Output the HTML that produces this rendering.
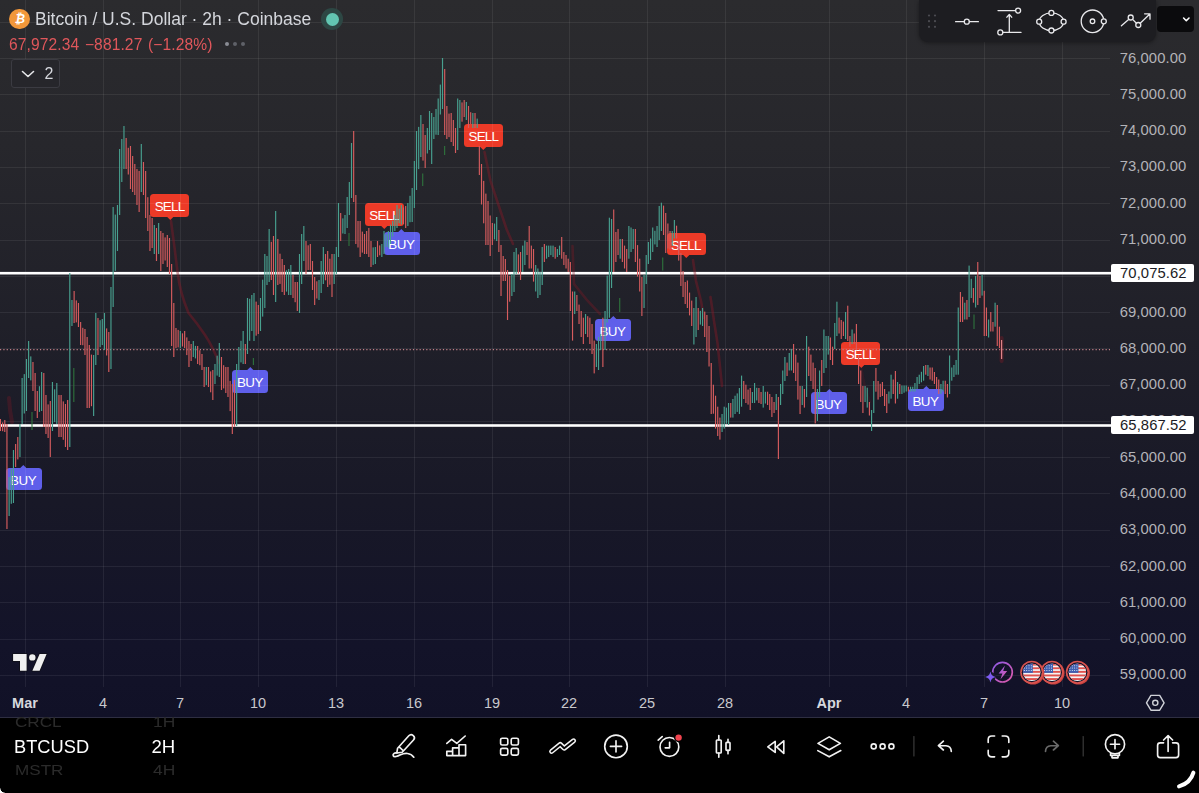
<!DOCTYPE html>
<html><head><meta charset="utf-8"><title>Bitcoin / U.S. Dollar</title>
<style>
*{box-sizing:border-box;margin:0;padding:0}
html,body{width:1199px;height:793px;overflow:hidden;background:#000}
body{font-family:"Liberation Sans",sans-serif;position:relative;color:#d1d4dc}
#chart{position:absolute;left:0;top:0;width:1199px;height:717px;background:linear-gradient(180deg,#2b2b2e 0%,#27272c 20%,#202029 45%,#181827 70%,#131329 90%,#111127 100%)}
#chart svg.main{position:absolute;left:0;top:0}
.pl{position:absolute;right:12.6px;width:90px;text-align:right;font-size:14.8px;line-height:18px;color:#b3b3b8;letter-spacing:.1px}
.tl{position:absolute;top:694px;width:60px;text-align:center;font-size:14.5px;line-height:18px;color:#c8c8cd}
.tl.b{font-weight:bold;color:#d6d8de}
.hl{position:absolute;left:0;width:1111px;height:3px;background:#fff}
.pb{position:absolute;left:1111px;width:82.5px;height:18.2px;background:#fff;color:#1b1b24;font-size:14.8px;line-height:18.2px;text-align:right;padding-right:6.8px;border-radius:2px;letter-spacing:.1px}
.sg{position:absolute;height:22.6px;border-radius:3.5px;color:#fff;font-size:13.4px;line-height:18.6px;padding-top:4px;text-align:left;white-space:nowrap}
.sg.sell{background:#ec3a27;padding-left:4.3px;letter-spacing:-.75px}
.sg.buy{background:#5f5fea;padding-left:4.6px;letter-spacing:-.5px}
.sg i{position:absolute;left:50%;margin-left:-2.3px;width:4.6px;height:4.6px;transform:rotate(45deg)}
.sg.sell i{bottom:-1.6px;background:#ec3a27}
.sg.buy i{top:-1.6px;background:#5f5fea}
#title{position:absolute;left:35px;top:7.8px;font-size:17.5px;line-height:22px;color:#d4d6dc;white-space:nowrap}
#vals{position:absolute;left:9px;top:36px;font-size:15.6px;line-height:18px;color:#e0575b;white-space:nowrap;letter-spacing:.1px;word-spacing:1.2px}
#btc{position:absolute;left:9.4px;top:8.9px;width:20.6px;height:20.6px;border-radius:50%;background:#f2973a;color:#fff;font-size:12px;font-style:italic;line-height:20.6px;text-align:center;font-weight:bold}
#dot{position:absolute;left:321px;top:8px;width:22px;height:22px;border-radius:50%;background:#2d4744}
#dot:after{content:"";position:absolute;left:4.5px;top:4.5px;width:13px;height:13px;border-radius:50%;background:#62c6b2}
#more{position:absolute;left:225px;top:42px}
#more b{display:inline-block;width:4px;height:4px;border-radius:50%;background:#8a8c94;margin-right:4px;vertical-align:top}
#more b+b{background:#5f6168}
#collapse{position:absolute;left:10.5px;top:59px;width:49px;height:29px;border:1px solid #3b3b42;border-radius:3px;background:#26262b}
#collapse span{position:absolute;left:33px;top:4px;font-size:16px;line-height:20px;color:#d4d6dc}
#tools{position:absolute;left:919px;top:0;width:237px;height:42px;background:#1d1d21;border-radius:0 0 9px 9px;box-shadow:0 1px 4px rgba(0,0,0,.4)}
#ccy{position:absolute;left:1157px;top:6px;width:36.5px;height:26px;background:#0b0b0d;border-radius:4px}
#bar{position:absolute;left:0;top:717px;width:1199px;height:76px;background:#000;box-shadow:inset 0 1px 0 #2e2e42}
.sym{position:absolute;left:14px;font-size:18.3px;line-height:24px;color:#fff;white-space:nowrap}
.sym.f{color:#2b2b2b;left:15.3px;font-size:14.5px;transform:scaleX(1.18);transform-origin:0 50%}
.tf{position:absolute;left:151.5px;font-size:18.6px;line-height:24px;color:#fff}
.tf.f{color:#2b2b2b;left:152.6px;font-size:14.5px;transform:scaleX(1.2);transform-origin:0 50%}
</style></head><body>
<div id="chart">
<div class="sg buy" style="left:5.5px;top:467.8px;width:36px">BUY<i></i></div>
<div class="sg sell" style="left:150.4px;top:194.2px;width:39px">SELL<i></i></div>
<div class="sg buy" style="left:232.3px;top:370px;width:36px">BUY<i></i></div>
<div class="sg sell" style="left:365.0px;top:203.4px;width:39px">SELL<i></i></div>
<div class="sg buy" style="left:383.7px;top:232px;width:36px">BUY<i></i></div>
<div class="sg sell" style="left:464.2px;top:124px;width:39px">SELL<i></i></div>
<div class="sg buy" style="left:594.8px;top:318.5px;width:36px">BUY<i></i></div>
<div class="sg sell" style="left:666.6px;top:232.8px;width:39px">SELL<i></i></div>
<div class="sg buy" style="left:810.9px;top:391.6px;width:36px">BUY<i></i></div>
<div class="sg sell" style="left:841.4px;top:342px;width:39px">SELL<i></i></div>
<div class="sg buy" style="left:907.8px;top:388.7px;width:36px">BUY<i></i></div>
<svg class="main" width="1199" height="717" viewBox="0 0 1199 717">
<g stroke="#ffffff" stroke-opacity="0.072" stroke-width="1" fill="none">
<path d="M25.5 0V687"/>
<path d="M103.5 0V687"/>
<path d="M180.5 0V687"/>
<path d="M258.5 0V687"/>
<path d="M336.5 0V687"/>
<path d="M414.5 0V687"/>
<path d="M492.5 0V687"/>
<path d="M569.5 0V687"/>
<path d="M647.5 0V687"/>
<path d="M725.5 0V687"/>
<path d="M829.5 0V687"/>
<path d="M906.5 0V687"/>
<path d="M984.5 0V687"/>
<path d="M1062.5 0V687"/>
<path d="M0 675.5H1110"/>
<path d="M0 639.5H1110"/>
<path d="M0 602.5H1110"/>
<path d="M0 566.5H1110"/>
<path d="M0 530.5H1110"/>
<path d="M0 493.5H1110"/>
<path d="M0 457.5H1110"/>
<path d="M0 421.5H1110"/>
<path d="M0 385.5H1110"/>
<path d="M0 348.5H1110"/>
<path d="M0 312.5H1110"/>
<path d="M0 276.5H1110"/>
<path d="M0 240.5H1110"/>
<path d="M0 203.5H1110"/>
<path d="M0 167.5H1110"/>
<path d="M0 131.5H1110"/>
<path d="M0 94.5H1110"/>
<path d="M0 58.5H1110"/>
<path d="M0 22.5H1110"/>
</g>
<path d="M0 349.7H1110" stroke="#c08088" stroke-width="1.2" stroke-dasharray="1.2 2.13"/>
<rect x="0" y="271.9" width="1111" height="2.6" fill="#fff"/><rect x="0" y="424.2" width="1111" height="2.6" fill="#fff"/>

<g fill="none" stroke="#8a1a26" stroke-width="2.6" stroke-linecap="round" stroke-linejoin="round" opacity="0.42">
<path d="M171 221 L174.7 249 L177.5 272 Q180 293 188.5 313 Q197 323 205 335 T219 363"/>
<path d="M484.5 152 L490.4 180.6 L498.5 205 L506.5 229 L513 244"/>
<path d="M572.5 246 L574 284 Q586 300 600 314" opacity=".8"/>
<path d="M693 260 L696 281 L701 301 L704 318"/>
<path d="M710.5 297 L714 321 L717.5 343 L722 386"/>
<path d="M9 398 C9.5 408 10.5 415 12 422" stroke-width="4" opacity=".7"/>
<path d="M861.5 369 C863 380 866 392 870 402" opacity=".4"/>
</g>
<path d="M1001.6 338V361" stroke="#8a1a26" stroke-width="4" opacity=".35" stroke-linecap="round"/>
<g fill="none" stroke="#2f7a3e" stroke-width="1.2" opacity=".85">
<path d="M32 412V430M73.8 368V402M619.7 298V312M662.7 257.5V270.5M444.6 146V155M422.7 173.5V186M974 314.5V329M253.4 358V365M349 233V246"/>
</g>

<g shape-rendering="auto">
<rect x="1001.02" y="340.0" width="1.15" height="19.0" fill="#e3878b"/>
<rect x="998.86" y="326.7" width="1.15" height="21.3" fill="#d65c5e"/>
<rect x="996.69" y="305.0" width="1.15" height="41.0" fill="#d65c5e"/>
<rect x="994.52" y="302.7" width="1.15" height="24.0" fill="#48a08f"/>
<rect x="992.36" y="322.0" width="1.15" height="9.5" fill="#d65c5e"/>
<rect x="990.19" y="312.0" width="1.15" height="19.5" fill="#d65c5e"/>
<rect x="988.02" y="319.5" width="1.15" height="18.0" fill="#48a08f"/>
<rect x="985.86" y="307.5" width="1.15" height="28.5" fill="#d65c5e"/>
<rect x="983.69" y="290.8" width="1.15" height="45.2" fill="#d65c5e"/>
<rect x="981.52" y="275.0" width="1.15" height="20.6" fill="#48a08f"/>
<rect x="979.36" y="276.0" width="1.15" height="22.0" fill="#d65c5e"/>
<rect x="977.19" y="262.0" width="1.15" height="43.0" fill="#d65c5e"/>
<rect x="975.02" y="276.0" width="1.15" height="31.5" fill="#48a08f"/>
<rect x="972.85" y="288.0" width="1.15" height="14.7" fill="#d65c5e"/>
<rect x="970.69" y="278.8" width="1.15" height="19.2" fill="#48a08f"/>
<rect x="968.52" y="265.6" width="1.15" height="51.4" fill="#48a08f"/>
<rect x="966.35" y="300.0" width="1.15" height="19.5" fill="#d65c5e"/>
<rect x="964.19" y="302.7" width="1.15" height="16.8" fill="#48a08f"/>
<rect x="962.02" y="296.8" width="1.15" height="25.2" fill="#d65c5e"/>
<rect x="959.85" y="292.0" width="1.15" height="30.0" fill="#d65c5e"/>
<rect x="957.68" y="307.5" width="1.15" height="67.2" fill="#48a08f"/>
<rect x="955.52" y="360.0" width="1.15" height="14.7" fill="#48a08f"/>
<rect x="953.35" y="365.0" width="1.15" height="12.0" fill="#48a08f"/>
<rect x="951.18" y="367.5" width="1.15" height="13.2" fill="#48a08f"/>
<rect x="949.02" y="355.5" width="1.15" height="38.5" fill="#48a08f"/>
<rect x="946.85" y="384.0" width="1.15" height="13.5" fill="#d65c5e"/>
<rect x="944.68" y="380.7" width="1.15" height="13.3" fill="#d65c5e"/>
<rect x="942.52" y="380.7" width="1.15" height="10.8" fill="#48a08f"/>
<rect x="940.35" y="384.0" width="1.15" height="10.0" fill="#48a08f"/>
<rect x="938.18" y="379.5" width="1.15" height="14.5" fill="#d65c5e"/>
<rect x="936.01" y="377.0" width="1.15" height="12.0" fill="#d65c5e"/>
<rect x="933.85" y="372.0" width="1.15" height="12.0" fill="#d65c5e"/>
<rect x="931.68" y="367.5" width="1.15" height="13.2" fill="#d65c5e"/>
<rect x="929.51" y="367.5" width="1.15" height="12.0" fill="#d65c5e"/>
<rect x="927.35" y="365.0" width="1.15" height="11.0" fill="#48a08f"/>
<rect x="925.18" y="365.0" width="1.15" height="9.7" fill="#d65c5e"/>
<rect x="923.01" y="366.0" width="1.15" height="14.7" fill="#48a08f"/>
<rect x="920.85" y="371.8" width="1.15" height="10.5" fill="#48a08f"/>
<rect x="918.68" y="374.7" width="1.15" height="9.3" fill="#48a08f"/>
<rect x="916.51" y="377.0" width="1.15" height="12.0" fill="#48a08f"/>
<rect x="914.35" y="383.0" width="1.15" height="8.5" fill="#48a08f"/>
<rect x="912.18" y="386.7" width="1.15" height="4.8" fill="#48a08f"/>
<rect x="910.01" y="386.7" width="1.15" height="4.8" fill="#48a08f"/>
<rect x="907.84" y="386.7" width="1.15" height="4.8" fill="#d65c5e"/>
<rect x="905.68" y="385.5" width="1.15" height="6.0" fill="#48a08f"/>
<rect x="903.51" y="385.5" width="1.15" height="7.2" fill="#48a08f"/>
<rect x="901.34" y="385.5" width="1.15" height="8.5" fill="#48a08f"/>
<rect x="899.18" y="384.0" width="1.15" height="10.0" fill="#d65c5e"/>
<rect x="897.01" y="382.0" width="1.15" height="16.7" fill="#48a08f"/>
<rect x="894.84" y="371.0" width="1.15" height="32.5" fill="#d65c5e"/>
<rect x="892.67" y="379.5" width="1.15" height="14.5" fill="#d65c5e"/>
<rect x="890.51" y="374.7" width="1.15" height="24.0" fill="#48a08f"/>
<rect x="888.34" y="391.5" width="1.15" height="12.0" fill="#48a08f"/>
<rect x="886.17" y="394.0" width="1.15" height="19.0" fill="#d65c5e"/>
<rect x="884.01" y="389.0" width="1.15" height="17.0" fill="#d65c5e"/>
<rect x="881.84" y="382.0" width="1.15" height="14.0" fill="#d65c5e"/>
<rect x="879.67" y="383.8" width="1.15" height="13.2" fill="#d65c5e"/>
<rect x="877.51" y="381.0" width="1.15" height="18.6" fill="#d65c5e"/>
<rect x="875.34" y="368.0" width="1.15" height="23.7" fill="#d65c5e"/>
<rect x="873.17" y="381.0" width="1.15" height="32.0" fill="#48a08f"/>
<rect x="871.00" y="410.0" width="1.15" height="21.0" fill="#48a08f"/>
<rect x="868.84" y="402.0" width="1.15" height="13.5" fill="#d65c5e"/>
<rect x="866.67" y="387.7" width="1.15" height="19.9" fill="#48a08f"/>
<rect x="864.50" y="386.0" width="1.15" height="16.0" fill="#48a08f"/>
<rect x="862.34" y="386.0" width="1.15" height="27.0" fill="#d65c5e"/>
<rect x="860.17" y="370.5" width="1.15" height="31.5" fill="#d65c5e"/>
<rect x="858.00" y="355.0" width="1.15" height="29.0" fill="#d65c5e"/>
<rect x="855.84" y="324.0" width="1.15" height="26.0" fill="#d65c5e"/>
<rect x="853.67" y="333.5" width="1.15" height="10.5" fill="#d65c5e"/>
<rect x="851.50" y="329.5" width="1.15" height="14.5" fill="#48a08f"/>
<rect x="849.34" y="336.0" width="1.15" height="10.7" fill="#d65c5e"/>
<rect x="847.17" y="305.7" width="1.15" height="35.3" fill="#d65c5e"/>
<rect x="845.00" y="312.0" width="1.15" height="27.0" fill="#48a08f"/>
<rect x="842.83" y="321.6" width="1.15" height="14.4" fill="#d65c5e"/>
<rect x="840.67" y="320.0" width="1.15" height="19.0" fill="#d65c5e"/>
<rect x="838.50" y="317.6" width="1.15" height="15.9" fill="#d65c5e"/>
<rect x="836.33" y="301.7" width="1.15" height="34.3" fill="#48a08f"/>
<rect x="834.17" y="323.0" width="1.15" height="26.0" fill="#48a08f"/>
<rect x="832.00" y="346.7" width="1.15" height="18.3" fill="#d65c5e"/>
<rect x="829.83" y="337.5" width="1.15" height="22.5" fill="#d65c5e"/>
<rect x="827.66" y="336.0" width="1.15" height="18.6" fill="#48a08f"/>
<rect x="825.50" y="336.0" width="1.15" height="32.0" fill="#48a08f"/>
<rect x="823.33" y="329.5" width="1.15" height="43.5" fill="#48a08f"/>
<rect x="821.16" y="360.0" width="1.15" height="26.0" fill="#d65c5e"/>
<rect x="819.00" y="370.5" width="1.15" height="26.5" fill="#48a08f"/>
<rect x="816.83" y="389.0" width="1.15" height="32.0" fill="#48a08f"/>
<rect x="814.66" y="368.0" width="1.15" height="55.4" fill="#d65c5e"/>
<rect x="812.50" y="362.6" width="1.15" height="26.4" fill="#d65c5e"/>
<rect x="810.33" y="354.6" width="1.15" height="26.4" fill="#d65c5e"/>
<rect x="808.16" y="346.7" width="1.15" height="29.3" fill="#d65c5e"/>
<rect x="806.00" y="336.0" width="1.15" height="61.0" fill="#48a08f"/>
<rect x="803.83" y="389.0" width="1.15" height="18.6" fill="#d65c5e"/>
<rect x="801.66" y="386.0" width="1.15" height="19.0" fill="#48a08f"/>
<rect x="799.49" y="386.0" width="1.15" height="28.0" fill="#d65c5e"/>
<rect x="797.33" y="362.6" width="1.15" height="37.0" fill="#d65c5e"/>
<rect x="795.16" y="354.6" width="1.15" height="26.4" fill="#d65c5e"/>
<rect x="792.99" y="344.0" width="1.15" height="29.0" fill="#d65c5e"/>
<rect x="790.83" y="349.0" width="1.15" height="21.5" fill="#48a08f"/>
<rect x="788.66" y="353.0" width="1.15" height="17.5" fill="#48a08f"/>
<rect x="786.49" y="362.6" width="1.15" height="13.4" fill="#d65c5e"/>
<rect x="784.33" y="357.0" width="1.15" height="24.0" fill="#48a08f"/>
<rect x="782.16" y="370.5" width="1.15" height="23.5" fill="#48a08f"/>
<rect x="779.99" y="384.0" width="1.15" height="21.0" fill="#48a08f"/>
<rect x="777.82" y="397.0" width="1.15" height="62.0" fill="#d65c5e"/>
<rect x="775.66" y="394.0" width="1.15" height="16.0" fill="#48a08f"/>
<rect x="773.49" y="402.0" width="1.15" height="11.0" fill="#d65c5e"/>
<rect x="771.32" y="397.0" width="1.15" height="20.0" fill="#d65c5e"/>
<rect x="769.16" y="394.0" width="1.15" height="16.0" fill="#d65c5e"/>
<rect x="766.99" y="391.7" width="1.15" height="13.3" fill="#d65c5e"/>
<rect x="764.82" y="391.8" width="1.15" height="11.7" fill="#48a08f"/>
<rect x="762.65" y="386.0" width="1.15" height="21.6" fill="#48a08f"/>
<rect x="760.49" y="392.0" width="1.15" height="12.0" fill="#d65c5e"/>
<rect x="758.32" y="388.0" width="1.15" height="15.0" fill="#d65c5e"/>
<rect x="756.15" y="387.8" width="1.15" height="12.6" fill="#48a08f"/>
<rect x="753.99" y="383.0" width="1.15" height="20.0" fill="#48a08f"/>
<rect x="751.82" y="392.0" width="1.15" height="11.0" fill="#48a08f"/>
<rect x="749.65" y="388.0" width="1.15" height="22.0" fill="#d65c5e"/>
<rect x="747.49" y="389.6" width="1.15" height="15.0" fill="#d65c5e"/>
<rect x="745.32" y="384.7" width="1.15" height="18.3" fill="#d65c5e"/>
<rect x="743.15" y="381.0" width="1.15" height="18.0" fill="#d65c5e"/>
<rect x="740.99" y="375.6" width="1.15" height="31.1" fill="#48a08f"/>
<rect x="738.82" y="388.0" width="1.15" height="26.0" fill="#48a08f"/>
<rect x="736.65" y="393.4" width="1.15" height="18.5" fill="#48a08f"/>
<rect x="734.48" y="395.7" width="1.15" height="18.3" fill="#48a08f"/>
<rect x="732.32" y="399.0" width="1.15" height="18.6" fill="#48a08f"/>
<rect x="730.15" y="403.0" width="1.15" height="14.6" fill="#d65c5e"/>
<rect x="727.98" y="403.0" width="1.15" height="22.0" fill="#48a08f"/>
<rect x="725.82" y="407.6" width="1.15" height="16.1" fill="#48a08f"/>
<rect x="723.65" y="406.7" width="1.15" height="21.9" fill="#48a08f"/>
<rect x="721.48" y="414.0" width="1.15" height="18.0" fill="#48a08f"/>
<rect x="719.32" y="417.6" width="1.15" height="22.0" fill="#d65c5e"/>
<rect x="717.15" y="406.7" width="1.15" height="29.3" fill="#d65c5e"/>
<rect x="714.98" y="395.7" width="1.15" height="32.9" fill="#d65c5e"/>
<rect x="712.81" y="384.7" width="1.15" height="29.0" fill="#d65c5e"/>
<rect x="710.65" y="363.0" width="1.15" height="51.0" fill="#d65c5e"/>
<rect x="708.48" y="326.0" width="1.15" height="40.5" fill="#d65c5e"/>
<rect x="706.31" y="315.0" width="1.15" height="37.0" fill="#d65c5e"/>
<rect x="704.15" y="311.6" width="1.15" height="25.4" fill="#d65c5e"/>
<rect x="701.98" y="308.0" width="1.15" height="18.0" fill="#48a08f"/>
<rect x="699.81" y="310.8" width="1.15" height="13.8" fill="#48a08f"/>
<rect x="697.64" y="308.0" width="1.15" height="22.0" fill="#d65c5e"/>
<rect x="695.48" y="297.0" width="1.15" height="40.0" fill="#48a08f"/>
<rect x="693.31" y="308.0" width="1.15" height="36.5" fill="#48a08f"/>
<rect x="691.14" y="300.6" width="1.15" height="25.4" fill="#d65c5e"/>
<rect x="688.98" y="292.6" width="1.15" height="22.8" fill="#d65c5e"/>
<rect x="686.81" y="280.5" width="1.15" height="27.5" fill="#d65c5e"/>
<rect x="684.64" y="282.0" width="1.15" height="22.0" fill="#d65c5e"/>
<rect x="682.48" y="271.0" width="1.15" height="26.0" fill="#d65c5e"/>
<rect x="680.31" y="253.0" width="1.15" height="33.0" fill="#d65c5e"/>
<rect x="678.14" y="240.8" width="1.15" height="19.8" fill="#d65c5e"/>
<rect x="675.98" y="225.7" width="1.15" height="12.8" fill="#d65c5e"/>
<rect x="673.81" y="220.0" width="1.15" height="18.5" fill="#48a08f"/>
<rect x="671.64" y="231.0" width="1.15" height="15.0" fill="#48a08f"/>
<rect x="669.47" y="231.0" width="1.15" height="18.5" fill="#d65c5e"/>
<rect x="667.31" y="223.5" width="1.15" height="25.0" fill="#d65c5e"/>
<rect x="665.14" y="213.0" width="1.15" height="40.0" fill="#d65c5e"/>
<rect x="662.97" y="205.6" width="1.15" height="29.4" fill="#d65c5e"/>
<rect x="660.81" y="202.7" width="1.15" height="28.3" fill="#48a08f"/>
<rect x="658.64" y="206.0" width="1.15" height="34.0" fill="#48a08f"/>
<rect x="656.47" y="226.0" width="1.15" height="21.0" fill="#48a08f"/>
<rect x="654.31" y="230.8" width="1.15" height="13.6" fill="#48a08f"/>
<rect x="652.14" y="227.5" width="1.15" height="24.5" fill="#48a08f"/>
<rect x="649.97" y="238.5" width="1.15" height="21.5" fill="#48a08f"/>
<rect x="647.80" y="242.0" width="1.15" height="22.0" fill="#48a08f"/>
<rect x="645.64" y="255.0" width="1.15" height="29.0" fill="#48a08f"/>
<rect x="643.47" y="275.0" width="1.15" height="33.0" fill="#48a08f"/>
<rect x="641.30" y="277.0" width="1.15" height="39.0" fill="#d65c5e"/>
<rect x="639.14" y="258.7" width="1.15" height="32.8" fill="#d65c5e"/>
<rect x="636.97" y="245.1" width="1.15" height="31.5" fill="#d65c5e"/>
<rect x="634.80" y="229.0" width="1.15" height="33.0" fill="#d65c5e"/>
<rect x="632.63" y="229.0" width="1.15" height="20.0" fill="#48a08f"/>
<rect x="630.47" y="227.5" width="1.15" height="24.5" fill="#48a08f"/>
<rect x="628.30" y="226.0" width="1.15" height="32.7" fill="#48a08f"/>
<rect x="626.13" y="249.0" width="1.15" height="23.0" fill="#d65c5e"/>
<rect x="623.97" y="245.6" width="1.15" height="22.9" fill="#d65c5e"/>
<rect x="621.80" y="239.0" width="1.15" height="23.0" fill="#d65c5e"/>
<rect x="619.63" y="239.0" width="1.15" height="19.7" fill="#48a08f"/>
<rect x="617.47" y="229.0" width="1.15" height="26.0" fill="#d65c5e"/>
<rect x="615.30" y="232.0" width="1.15" height="30.0" fill="#d65c5e"/>
<rect x="613.13" y="209.5" width="1.15" height="62.5" fill="#d65c5e"/>
<rect x="610.97" y="219.0" width="1.15" height="69.0" fill="#48a08f"/>
<rect x="608.80" y="217.7" width="1.15" height="100.0" fill="#48a08f"/>
<rect x="606.63" y="275.6" width="1.15" height="47.0" fill="#48a08f"/>
<rect x="604.46" y="311.0" width="1.15" height="39.0" fill="#48a08f"/>
<rect x="602.30" y="317.7" width="1.15" height="49.3" fill="#d65c5e"/>
<rect x="600.13" y="334.0" width="1.15" height="16.0" fill="#48a08f"/>
<rect x="597.96" y="337.0" width="1.15" height="33.0" fill="#48a08f"/>
<rect x="595.80" y="344.0" width="1.15" height="23.0" fill="#48a08f"/>
<rect x="593.63" y="340.6" width="1.15" height="32.8" fill="#d65c5e"/>
<rect x="591.46" y="324.0" width="1.15" height="30.0" fill="#d65c5e"/>
<rect x="589.30" y="317.7" width="1.15" height="26.3" fill="#d65c5e"/>
<rect x="587.13" y="316.2" width="1.15" height="20.9" fill="#d65c5e"/>
<rect x="584.96" y="314.0" width="1.15" height="20.0" fill="#48a08f"/>
<rect x="582.79" y="317.7" width="1.15" height="26.3" fill="#d65c5e"/>
<rect x="580.63" y="311.0" width="1.15" height="26.0" fill="#d65c5e"/>
<rect x="578.46" y="304.6" width="1.15" height="19.4" fill="#d65c5e"/>
<rect x="576.29" y="295.0" width="1.15" height="16.0" fill="#d65c5e"/>
<rect x="574.13" y="291.5" width="1.15" height="22.5" fill="#48a08f"/>
<rect x="571.96" y="291.5" width="1.15" height="49.1" fill="#d65c5e"/>
<rect x="569.79" y="262.0" width="1.15" height="49.0" fill="#d65c5e"/>
<rect x="567.62" y="258.7" width="1.15" height="13.3" fill="#d65c5e"/>
<rect x="565.46" y="255.0" width="1.15" height="13.5" fill="#d65c5e"/>
<rect x="563.29" y="252.0" width="1.15" height="13.0" fill="#d65c5e"/>
<rect x="561.12" y="237.0" width="1.15" height="21.7" fill="#d65c5e"/>
<rect x="558.96" y="245.6" width="1.15" height="9.4" fill="#48a08f"/>
<rect x="556.79" y="249.0" width="1.15" height="8.0" fill="#48a08f"/>
<rect x="554.62" y="247.0" width="1.15" height="11.7" fill="#d65c5e"/>
<rect x="552.46" y="245.6" width="1.15" height="11.4" fill="#48a08f"/>
<rect x="550.29" y="245.6" width="1.15" height="9.5" fill="#48a08f"/>
<rect x="548.12" y="245.6" width="1.15" height="11.4" fill="#48a08f"/>
<rect x="545.96" y="245.6" width="1.15" height="13.1" fill="#48a08f"/>
<rect x="543.79" y="244.0" width="1.15" height="18.0" fill="#d65c5e"/>
<rect x="541.62" y="247.0" width="1.15" height="38.0" fill="#48a08f"/>
<rect x="539.45" y="272.0" width="1.15" height="23.0" fill="#48a08f"/>
<rect x="537.29" y="268.5" width="1.15" height="29.5" fill="#48a08f"/>
<rect x="535.12" y="265.0" width="1.15" height="26.5" fill="#48a08f"/>
<rect x="532.95" y="249.0" width="1.15" height="32.6" fill="#d65c5e"/>
<rect x="530.79" y="245.6" width="1.15" height="22.9" fill="#d65c5e"/>
<rect x="528.62" y="226.0" width="1.15" height="42.5" fill="#d65c5e"/>
<rect x="526.45" y="242.0" width="1.15" height="13.0" fill="#d65c5e"/>
<rect x="524.29" y="240.6" width="1.15" height="24.4" fill="#48a08f"/>
<rect x="522.12" y="245.6" width="1.15" height="26.4" fill="#48a08f"/>
<rect x="519.95" y="252.0" width="1.15" height="28.0" fill="#d65c5e"/>
<rect x="517.78" y="254.4" width="1.15" height="19.2" fill="#d65c5e"/>
<rect x="515.62" y="248.0" width="1.15" height="26.0" fill="#48a08f"/>
<rect x="513.45" y="252.0" width="1.15" height="40.0" fill="#48a08f"/>
<rect x="511.28" y="274.0" width="1.15" height="22.0" fill="#48a08f"/>
<rect x="509.12" y="275.8" width="1.15" height="25.9" fill="#d65c5e"/>
<rect x="506.95" y="270.0" width="1.15" height="50.0" fill="#d65c5e"/>
<rect x="504.78" y="259.0" width="1.15" height="22.0" fill="#d65c5e"/>
<rect x="502.62" y="256.0" width="1.15" height="25.0" fill="#d65c5e"/>
<rect x="500.45" y="245.0" width="1.15" height="51.0" fill="#d65c5e"/>
<rect x="498.28" y="230.0" width="1.15" height="22.0" fill="#d65c5e"/>
<rect x="496.11" y="217.0" width="1.15" height="24.0" fill="#48a08f"/>
<rect x="493.95" y="223.6" width="1.15" height="15.8" fill="#48a08f"/>
<rect x="491.78" y="223.0" width="1.15" height="22.0" fill="#d65c5e"/>
<rect x="489.61" y="215.5" width="1.15" height="40.5" fill="#d65c5e"/>
<rect x="487.45" y="201.0" width="1.15" height="44.0" fill="#d65c5e"/>
<rect x="485.28" y="193.6" width="1.15" height="51.4" fill="#d65c5e"/>
<rect x="483.11" y="180.9" width="1.15" height="42.4" fill="#d65c5e"/>
<rect x="480.95" y="164.0" width="1.15" height="40.5" fill="#d65c5e"/>
<rect x="478.78" y="146.0" width="1.15" height="29.0" fill="#d65c5e"/>
<rect x="476.61" y="118.6" width="1.15" height="9.4" fill="#48a08f"/>
<rect x="474.44" y="113.0" width="1.15" height="15.0" fill="#d65c5e"/>
<rect x="472.28" y="113.0" width="1.15" height="15.0" fill="#48a08f"/>
<rect x="470.11" y="112.2" width="1.15" height="12.0" fill="#d65c5e"/>
<rect x="467.94" y="106.0" width="1.15" height="22.0" fill="#d65c5e"/>
<rect x="465.78" y="102.0" width="1.15" height="18.0" fill="#48a08f"/>
<rect x="463.61" y="100.0" width="1.15" height="17.0" fill="#d65c5e"/>
<rect x="461.44" y="102.4" width="1.15" height="19.3" fill="#d65c5e"/>
<rect x="459.28" y="100.0" width="1.15" height="28.0" fill="#48a08f"/>
<rect x="457.11" y="98.5" width="1.15" height="51.5" fill="#48a08f"/>
<rect x="454.94" y="128.0" width="1.15" height="25.0" fill="#d65c5e"/>
<rect x="452.77" y="120.0" width="1.15" height="26.0" fill="#d65c5e"/>
<rect x="450.61" y="113.0" width="1.15" height="29.0" fill="#d65c5e"/>
<rect x="448.44" y="113.6" width="1.15" height="23.5" fill="#d65c5e"/>
<rect x="446.27" y="106.0" width="1.15" height="33.0" fill="#d65c5e"/>
<rect x="444.11" y="69.0" width="1.15" height="66.0" fill="#d65c5e"/>
<rect x="441.94" y="58.0" width="1.15" height="51.0" fill="#48a08f"/>
<rect x="439.77" y="84.6" width="1.15" height="29.9" fill="#48a08f"/>
<rect x="437.61" y="98.5" width="1.15" height="36.5" fill="#48a08f"/>
<rect x="435.44" y="109.0" width="1.15" height="25.7" fill="#48a08f"/>
<rect x="433.27" y="117.0" width="1.15" height="22.0" fill="#48a08f"/>
<rect x="431.10" y="113.0" width="1.15" height="51.0" fill="#48a08f"/>
<rect x="428.94" y="111.0" width="1.15" height="39.0" fill="#48a08f"/>
<rect x="426.77" y="128.0" width="1.15" height="25.5" fill="#48a08f"/>
<rect x="424.60" y="135.0" width="1.15" height="33.0" fill="#d65c5e"/>
<rect x="422.44" y="124.0" width="1.15" height="36.6" fill="#d65c5e"/>
<rect x="420.27" y="115.0" width="1.15" height="42.0" fill="#48a08f"/>
<rect x="418.10" y="126.9" width="1.15" height="42.2" fill="#48a08f"/>
<rect x="415.94" y="131.0" width="1.15" height="59.0" fill="#48a08f"/>
<rect x="413.77" y="161.0" width="1.15" height="47.0" fill="#48a08f"/>
<rect x="411.60" y="188.0" width="1.15" height="34.0" fill="#48a08f"/>
<rect x="409.43" y="195.8" width="1.15" height="26.4" fill="#48a08f"/>
<rect x="407.27" y="203.0" width="1.15" height="23.0" fill="#48a08f"/>
<rect x="405.10" y="206.0" width="1.15" height="22.0" fill="#d65c5e"/>
<rect x="402.93" y="207.4" width="1.15" height="16.6" fill="#d65c5e"/>
<rect x="400.77" y="205.0" width="1.15" height="19.6" fill="#48a08f"/>
<rect x="398.60" y="208.6" width="1.15" height="14.6" fill="#48a08f"/>
<rect x="396.43" y="205.0" width="1.15" height="23.0" fill="#48a08f"/>
<rect x="394.27" y="215.0" width="1.15" height="16.0" fill="#48a08f"/>
<rect x="392.10" y="220.9" width="1.15" height="15.6" fill="#48a08f"/>
<rect x="389.93" y="224.6" width="1.15" height="19.4" fill="#48a08f"/>
<rect x="387.76" y="231.0" width="1.15" height="16.5" fill="#48a08f"/>
<rect x="385.60" y="234.2" width="1.15" height="12.7" fill="#48a08f"/>
<rect x="383.43" y="231.0" width="1.15" height="23.0" fill="#48a08f"/>
<rect x="381.26" y="244.0" width="1.15" height="13.0" fill="#48a08f"/>
<rect x="379.10" y="245.4" width="1.15" height="9.9" fill="#d65c5e"/>
<rect x="376.93" y="241.0" width="1.15" height="16.0" fill="#d65c5e"/>
<rect x="374.76" y="247.0" width="1.15" height="17.0" fill="#48a08f"/>
<rect x="372.60" y="247.4" width="1.15" height="17.5" fill="#48a08f"/>
<rect x="370.43" y="241.0" width="1.15" height="26.0" fill="#d65c5e"/>
<rect x="368.26" y="228.0" width="1.15" height="29.0" fill="#d65c5e"/>
<rect x="366.09" y="231.0" width="1.15" height="23.0" fill="#d65c5e"/>
<rect x="363.93" y="234.0" width="1.15" height="20.0" fill="#d65c5e"/>
<rect x="361.76" y="231.6" width="1.15" height="21.0" fill="#d65c5e"/>
<rect x="359.59" y="221.0" width="1.15" height="36.0" fill="#d65c5e"/>
<rect x="357.43" y="221.0" width="1.15" height="26.5" fill="#d65c5e"/>
<rect x="355.26" y="195.0" width="1.15" height="49.0" fill="#d65c5e"/>
<rect x="353.09" y="131.0" width="1.15" height="71.0" fill="#d65c5e"/>
<rect x="350.93" y="143.0" width="1.15" height="55.0" fill="#48a08f"/>
<rect x="348.76" y="182.0" width="1.15" height="33.0" fill="#48a08f"/>
<rect x="346.59" y="197.0" width="1.15" height="31.0" fill="#48a08f"/>
<rect x="344.42" y="215.0" width="1.15" height="19.0" fill="#48a08f"/>
<rect x="342.26" y="218.4" width="1.15" height="15.1" fill="#48a08f"/>
<rect x="340.09" y="213.0" width="1.15" height="28.0" fill="#d65c5e"/>
<rect x="337.92" y="203.0" width="1.15" height="54.0" fill="#48a08f"/>
<rect x="335.76" y="247.0" width="1.15" height="27.0" fill="#48a08f"/>
<rect x="333.59" y="254.0" width="1.15" height="30.0" fill="#48a08f"/>
<rect x="331.42" y="254.0" width="1.15" height="43.0" fill="#d65c5e"/>
<rect x="329.26" y="258.7" width="1.15" height="26.0" fill="#d65c5e"/>
<rect x="327.09" y="251.0" width="1.15" height="36.0" fill="#d65c5e"/>
<rect x="324.92" y="254.0" width="1.15" height="26.3" fill="#d65c5e"/>
<rect x="322.75" y="247.0" width="1.15" height="37.0" fill="#48a08f"/>
<rect x="320.59" y="261.0" width="1.15" height="32.0" fill="#48a08f"/>
<rect x="318.42" y="280.0" width="1.15" height="20.0" fill="#48a08f"/>
<rect x="316.25" y="281.3" width="1.15" height="17.2" fill="#d65c5e"/>
<rect x="314.09" y="277.0" width="1.15" height="28.0" fill="#d65c5e"/>
<rect x="311.92" y="261.0" width="1.15" height="29.0" fill="#d65c5e"/>
<rect x="309.75" y="244.0" width="1.15" height="26.0" fill="#d65c5e"/>
<rect x="307.59" y="245.3" width="1.15" height="24.7" fill="#d65c5e"/>
<rect x="305.42" y="241.0" width="1.15" height="33.0" fill="#d65c5e"/>
<rect x="303.25" y="226.0" width="1.15" height="35.0" fill="#48a08f"/>
<rect x="301.08" y="234.0" width="1.15" height="50.0" fill="#48a08f"/>
<rect x="298.92" y="254.0" width="1.15" height="59.0" fill="#48a08f"/>
<rect x="296.75" y="282.0" width="1.15" height="29.0" fill="#d65c5e"/>
<rect x="294.58" y="282.0" width="1.15" height="20.2" fill="#d65c5e"/>
<rect x="292.42" y="275.0" width="1.15" height="23.0" fill="#d65c5e"/>
<rect x="290.25" y="265.0" width="1.15" height="30.0" fill="#48a08f"/>
<rect x="288.08" y="269.0" width="1.15" height="26.0" fill="#48a08f"/>
<rect x="285.92" y="270.3" width="1.15" height="21.3" fill="#48a08f"/>
<rect x="283.75" y="265.0" width="1.15" height="30.0" fill="#d65c5e"/>
<rect x="281.58" y="259.0" width="1.15" height="33.0" fill="#d65c5e"/>
<rect x="279.41" y="253.7" width="1.15" height="30.2" fill="#d65c5e"/>
<rect x="277.25" y="239.0" width="1.15" height="46.0" fill="#d65c5e"/>
<rect x="275.08" y="211.0" width="1.15" height="91.0" fill="#48a08f"/>
<rect x="272.91" y="236.0" width="1.15" height="59.0" fill="#d65c5e"/>
<rect x="270.75" y="241.8" width="1.15" height="38.2" fill="#d65c5e"/>
<rect x="268.58" y="229.0" width="1.15" height="53.0" fill="#48a08f"/>
<rect x="266.41" y="256.0" width="1.15" height="29.0" fill="#48a08f"/>
<rect x="264.25" y="254.0" width="1.15" height="54.0" fill="#48a08f"/>
<rect x="262.08" y="279.7" width="1.15" height="36.9" fill="#48a08f"/>
<rect x="259.91" y="298.0" width="1.15" height="33.0" fill="#48a08f"/>
<rect x="257.74" y="305.0" width="1.15" height="29.0" fill="#d65c5e"/>
<rect x="255.58" y="301.6" width="1.15" height="34.1" fill="#d65c5e"/>
<rect x="253.41" y="293.0" width="1.15" height="48.0" fill="#48a08f"/>
<rect x="251.24" y="295.0" width="1.15" height="36.0" fill="#48a08f"/>
<rect x="249.08" y="298.8" width="1.15" height="42.0" fill="#48a08f"/>
<rect x="246.91" y="298.0" width="1.15" height="56.0" fill="#48a08f"/>
<rect x="244.74" y="344.0" width="1.15" height="20.0" fill="#d65c5e"/>
<rect x="242.58" y="331.0" width="1.15" height="33.0" fill="#48a08f"/>
<rect x="240.41" y="340.8" width="1.15" height="21.6" fill="#48a08f"/>
<rect x="238.24" y="347.0" width="1.15" height="23.0" fill="#48a08f"/>
<rect x="236.07" y="364.0" width="1.15" height="62.0" fill="#48a08f"/>
<rect x="233.91" y="379.9" width="1.15" height="46.8" fill="#d65c5e"/>
<rect x="231.74" y="384.0" width="1.15" height="50.0" fill="#d65c5e"/>
<rect x="229.57" y="380.9" width="1.15" height="30.2" fill="#d65c5e"/>
<rect x="227.41" y="367.0" width="1.15" height="30.0" fill="#d65c5e"/>
<rect x="225.24" y="367.0" width="1.15" height="26.0" fill="#d65c5e"/>
<rect x="223.07" y="365.2" width="1.15" height="23.2" fill="#d65c5e"/>
<rect x="220.91" y="357.0" width="1.15" height="33.0" fill="#d65c5e"/>
<rect x="218.74" y="343.0" width="1.15" height="34.0" fill="#48a08f"/>
<rect x="216.57" y="355.7" width="1.15" height="19.9" fill="#48a08f"/>
<rect x="214.40" y="364.0" width="1.15" height="20.0" fill="#48a08f"/>
<rect x="212.24" y="370.0" width="1.15" height="30.0" fill="#d65c5e"/>
<rect x="210.07" y="371.4" width="1.15" height="20.9" fill="#d65c5e"/>
<rect x="207.90" y="367.0" width="1.15" height="20.0" fill="#d65c5e"/>
<rect x="205.74" y="367.0" width="1.15" height="18.0" fill="#48a08f"/>
<rect x="203.57" y="367.0" width="1.15" height="20.0" fill="#d65c5e"/>
<rect x="201.40" y="354.0" width="1.15" height="16.0" fill="#d65c5e"/>
<rect x="199.24" y="350.3" width="1.15" height="14.9" fill="#d65c5e"/>
<rect x="197.07" y="346.0" width="1.15" height="18.0" fill="#d65c5e"/>
<rect x="194.90" y="345.9" width="1.15" height="12.5" fill="#48a08f"/>
<rect x="192.73" y="341.0" width="1.15" height="16.0" fill="#48a08f"/>
<rect x="190.57" y="344.0" width="1.15" height="17.0" fill="#d65c5e"/>
<rect x="188.40" y="341.0" width="1.15" height="26.0" fill="#d65c5e"/>
<rect x="186.23" y="337.4" width="1.15" height="17.7" fill="#d65c5e"/>
<rect x="184.07" y="331.0" width="1.15" height="17.0" fill="#d65c5e"/>
<rect x="181.90" y="333.3" width="1.15" height="13.2" fill="#d65c5e"/>
<rect x="179.73" y="331.0" width="1.15" height="17.0" fill="#48a08f"/>
<rect x="177.57" y="329.9" width="1.15" height="17.5" fill="#d65c5e"/>
<rect x="175.40" y="328.0" width="1.15" height="20.0" fill="#d65c5e"/>
<rect x="173.23" y="303.0" width="1.15" height="54.0" fill="#d65c5e"/>
<rect x="171.06" y="264.0" width="1.15" height="82.0" fill="#d65c5e"/>
<rect x="168.90" y="238.0" width="1.15" height="36.0" fill="#d65c5e"/>
<rect x="166.73" y="235.0" width="1.15" height="32.0" fill="#d65c5e"/>
<rect x="164.56" y="237.4" width="1.15" height="23.1" fill="#d65c5e"/>
<rect x="162.40" y="233.0" width="1.15" height="31.0" fill="#d65c5e"/>
<rect x="160.23" y="231.0" width="1.15" height="40.0" fill="#d65c5e"/>
<rect x="158.06" y="223.0" width="1.15" height="31.0" fill="#48a08f"/>
<rect x="155.90" y="228.0" width="1.15" height="33.0" fill="#d65c5e"/>
<rect x="153.73" y="225.0" width="1.15" height="29.0" fill="#48a08f"/>
<rect x="151.56" y="218.0" width="1.15" height="30.0" fill="#d65c5e"/>
<rect x="149.39" y="215.0" width="1.15" height="36.0" fill="#d65c5e"/>
<rect x="147.23" y="197.2" width="1.15" height="33.8" fill="#d65c5e"/>
<rect x="145.06" y="171.0" width="1.15" height="47.0" fill="#d65c5e"/>
<rect x="142.89" y="162.0" width="1.15" height="33.0" fill="#d65c5e"/>
<rect x="140.73" y="144.0" width="1.15" height="48.0" fill="#48a08f"/>
<rect x="138.56" y="171.0" width="1.15" height="41.0" fill="#d65c5e"/>
<rect x="136.39" y="169.0" width="1.15" height="36.0" fill="#d65c5e"/>
<rect x="134.23" y="164.0" width="1.15" height="31.0" fill="#d65c5e"/>
<rect x="132.06" y="156.0" width="1.15" height="36.0" fill="#d65c5e"/>
<rect x="129.89" y="146.0" width="1.15" height="43.0" fill="#d65c5e"/>
<rect x="127.72" y="147.8" width="1.15" height="26.7" fill="#d65c5e"/>
<rect x="125.56" y="138.0" width="1.15" height="31.0" fill="#d65c5e"/>
<rect x="123.39" y="126.0" width="1.15" height="43.0" fill="#48a08f"/>
<rect x="121.22" y="139.0" width="1.15" height="43.0" fill="#48a08f"/>
<rect x="119.06" y="149.0" width="1.15" height="66.0" fill="#48a08f"/>
<rect x="116.89" y="205.0" width="1.15" height="46.0" fill="#48a08f"/>
<rect x="114.72" y="214.6" width="1.15" height="56.3" fill="#48a08f"/>
<rect x="112.56" y="207.0" width="1.15" height="100.0" fill="#48a08f"/>
<rect x="110.39" y="287.0" width="1.15" height="82.0" fill="#48a08f"/>
<rect x="108.22" y="332.0" width="1.15" height="40.0" fill="#d65c5e"/>
<rect x="106.05" y="328.4" width="1.15" height="27.1" fill="#d65c5e"/>
<rect x="103.89" y="313.0" width="1.15" height="37.0" fill="#48a08f"/>
<rect x="101.72" y="319.0" width="1.15" height="26.0" fill="#48a08f"/>
<rect x="99.55" y="320.2" width="1.15" height="27.1" fill="#48a08f"/>
<rect x="97.39" y="318.0" width="1.15" height="37.0" fill="#d65c5e"/>
<rect x="95.22" y="313.0" width="1.15" height="52.0" fill="#48a08f"/>
<rect x="93.05" y="355.0" width="1.15" height="61.0" fill="#48a08f"/>
<rect x="90.89" y="354.6" width="1.15" height="51.6" fill="#d65c5e"/>
<rect x="88.72" y="345.0" width="1.15" height="63.0" fill="#d65c5e"/>
<rect x="86.55" y="337.0" width="1.15" height="71.0" fill="#d65c5e"/>
<rect x="84.38" y="329.0" width="1.15" height="26.0" fill="#d65c5e"/>
<rect x="82.22" y="327.8" width="1.15" height="17.4" fill="#d65c5e"/>
<rect x="80.05" y="322.0" width="1.15" height="23.0" fill="#d65c5e"/>
<rect x="77.88" y="303.0" width="1.15" height="24.0" fill="#d65c5e"/>
<rect x="75.72" y="300.4" width="1.15" height="22.0" fill="#d65c5e"/>
<rect x="73.55" y="291.0" width="1.15" height="32.0" fill="#d65c5e"/>
<rect x="71.38" y="300.0" width="1.15" height="26.0" fill="#48a08f"/>
<rect x="69.22" y="273.0" width="1.15" height="174.0" fill="#48a08f"/>
<rect x="67.05" y="400.0" width="1.15" height="50.0" fill="#d65c5e"/>
<rect x="64.88" y="404.0" width="1.15" height="43.0" fill="#d65c5e"/>
<rect x="62.71" y="401.4" width="1.15" height="38.4" fill="#d65c5e"/>
<rect x="60.55" y="395.0" width="1.15" height="42.0" fill="#d65c5e"/>
<rect x="58.38" y="395.0" width="1.15" height="42.0" fill="#d65c5e"/>
<rect x="56.21" y="383.0" width="1.15" height="41.0" fill="#48a08f"/>
<rect x="54.05" y="389.3" width="1.15" height="32.8" fill="#48a08f"/>
<rect x="51.88" y="382.0" width="1.15" height="49.0" fill="#48a08f"/>
<rect x="49.71" y="401.0" width="1.15" height="56.0" fill="#d65c5e"/>
<rect x="47.55" y="404.4" width="1.15" height="33.6" fill="#d65c5e"/>
<rect x="45.38" y="395.0" width="1.15" height="39.0" fill="#d65c5e"/>
<rect x="43.21" y="373.0" width="1.15" height="54.0" fill="#d65c5e"/>
<rect x="41.04" y="372.0" width="1.15" height="39.0" fill="#48a08f"/>
<rect x="38.88" y="386.2" width="1.15" height="25.7" fill="#48a08f"/>
<rect x="36.71" y="391.0" width="1.15" height="27.0" fill="#d65c5e"/>
<rect x="34.54" y="373.0" width="1.15" height="38.0" fill="#d65c5e"/>
<rect x="32.38" y="362.0" width="1.15" height="29.0" fill="#d65c5e"/>
<rect x="30.21" y="356.4" width="1.15" height="24.0" fill="#48a08f"/>
<rect x="28.04" y="341.0" width="1.15" height="37.0" fill="#48a08f"/>
<rect x="25.88" y="359.0" width="1.15" height="52.0" fill="#48a08f"/>
<rect x="23.71" y="374.1" width="1.15" height="39.4" fill="#48a08f"/>
<rect x="21.54" y="378.0" width="1.15" height="46.0" fill="#48a08f"/>
<rect x="19.37" y="424.0" width="1.15" height="33.0" fill="#48a08f"/>
<rect x="17.21" y="437.0" width="1.15" height="22.4" fill="#d65c5e"/>
<rect x="15.04" y="444.0" width="1.15" height="23.0" fill="#d65c5e"/>
<rect x="12.87" y="450.0" width="1.15" height="53.0" fill="#48a08f"/>
<rect x="10.71" y="468.8" width="1.15" height="35.0" fill="#48a08f"/>
<rect x="8.54" y="477.0" width="1.15" height="39.0" fill="#48a08f"/>
<rect x="6.37" y="424.0" width="1.15" height="105.0" fill="#d65c5e"/>
<rect x="4.21" y="420.0" width="1.15" height="12.0" fill="#d65c5e"/>
<rect x="2.04" y="422.4" width="1.15" height="8.8" fill="#d65c5e"/>
<rect x="-0.13" y="419.0" width="1.15" height="12.0" fill="#d65c5e"/>
</g>
</svg>
<div class="pl" style="top:665.4px">59,000.00</div>
<div class="pl" style="top:629.1px">60,000.00</div>
<div class="pl" style="top:592.8px">61,000.00</div>
<div class="pl" style="top:556.5px">62,000.00</div>
<div class="pl" style="top:520.2px">63,000.00</div>
<div class="pl" style="top:484.0px">64,000.00</div>
<div class="pl" style="top:447.7px">65,000.00</div>
<div class="pl" style="top:411.4px">66,000.00</div>
<div class="pl" style="top:375.1px">67,000.00</div>
<div class="pl" style="top:338.8px">68,000.00</div>
<div class="pl" style="top:302.6px">69,000.00</div>
<div class="pl" style="top:266.3px">70,000.00</div>
<div class="pl" style="top:230.0px">71,000.00</div>
<div class="pl" style="top:193.7px">72,000.00</div>
<div class="pl" style="top:157.4px">73,000.00</div>
<div class="pl" style="top:121.2px">74,000.00</div>
<div class="pl" style="top:84.9px">75,000.00</div>
<div class="pl" style="top:48.6px">76,000.00</div>
<div class="pb" style="top:264.1px">70,075.62</div>
<div class="pb" style="top:416.2px">65,867.52</div>
<div class="tl b" style="left:-5px">Mar</div>
<div class="tl" style="left:73px">4</div>
<div class="tl" style="left:150px">7</div>
<div class="tl" style="left:228px">10</div>
<div class="tl" style="left:306px">13</div>
<div class="tl" style="left:384px">16</div>
<div class="tl" style="left:462px">19</div>
<div class="tl" style="left:539px">22</div>
<div class="tl" style="left:617px">25</div>
<div class="tl" style="left:695px">28</div>
<div class="tl b" style="left:799px">Apr</div>
<div class="tl" style="left:876px">4</div>
<div class="tl" style="left:954px">7</div>
<div class="tl" style="left:1032px">10</div>
<div id="btc">₿</div>
<div id="title">Bitcoin / U.S. Dollar · 2h · Coinbase</div>
<div id="dot"></div>
<div id="vals">67,972.34 −881.27 (−1.28%)</div>
<div id="more"><b></b><b></b><b></b></div>
<div id="collapse"><svg width="49" height="29" style="position:absolute;left:-1px;top:-1px"><path d="M11.5 12.5l5.5 5 5.5-5" fill="none" stroke="#e6e7ea" stroke-width="1.6" stroke-linecap="round" stroke-linejoin="round"/></svg><span>2</span></div>
<div id="tools"><svg width="237" height="42" viewBox="919 0 237 42" style="position:absolute;left:0;top:0" fill="none" stroke="#e9e9ec" stroke-width="1.3" stroke-linecap="round" stroke-linejoin="round">
<circle cx="929" cy="15.5" r="1.1" fill="#4c4c52" stroke="none"/>
<circle cx="929" cy="21.2" r="1.1" fill="#4c4c52" stroke="none"/>
<circle cx="929" cy="26.8" r="1.1" fill="#4c4c52" stroke="none"/>
<circle cx="935" cy="15.5" r="1.1" fill="#4c4c52" stroke="none"/>
<circle cx="935" cy="21.2" r="1.1" fill="#4c4c52" stroke="none"/>
<circle cx="935" cy="26.8" r="1.1" fill="#4c4c52" stroke="none"/>
<path d="M955.6 21.7H964.2M969.4 21.7H978.4"/><circle cx="966.8" cy="21.7" r="2.5"/>
<path d="M998 10.6H1015.4M1003 32.4H1021M1009.3 32V15M1006.9 17.2L1009.3 14.4L1011.7 17.2"/><circle cx="1018.1" cy="10.6" r="2.5"/><circle cx="1000.3" cy="32.4" r="2.5"/>
<ellipse cx="1051.4" cy="21.7" rx="12.2" ry="8.8"/>
<circle cx="1051.4" cy="12.9" r="2.5" fill="#1d1d21"/>
<circle cx="1051.4" cy="30.5" r="2.5" fill="#1d1d21"/>
<circle cx="1039.2" cy="21.7" r="2.5" fill="#1d1d21"/>
<circle cx="1063.6" cy="21.7" r="2.5" fill="#1d1d21"/>
<circle cx="1092.5" cy="21.3" r="11.3"/><circle cx="1092.5" cy="21.3" r="2.3"/><circle cx="1103.8" cy="21.3" r="2.5" fill="#1d1d21"/>
<path d="M1121.4 25.8L1128.9 19.2M1132.6 19.4L1136.4 23.2M1140.2 23.2L1149.6 14.2M1144.6 13.8H1150V19.2"/><circle cx="1130.7" cy="17.5" r="2.5"/><circle cx="1138.3" cy="25" r="2.5"/>
</svg></div>
<div id="ccy"><svg width="37" height="26"><path d="M26.6 12l2.7 2.7 2.7-2.7" fill="none" stroke="#fff" stroke-width="1.6" stroke-linecap="round" stroke-linejoin="round"/></svg></div>
<svg width="1199" height="717" viewBox="0 0 1199 717" style="position:absolute;left:0;top:0;pointer-events:none">
<g fill="#f0f0f0" stroke="#101018" stroke-width="1.6" paint-order="stroke" stroke-linejoin="round"><path d="M13.1 654H26.6V670.8H20V661H13.1Z"/><circle cx="32.3" cy="657.4" r="3.2"/><path d="M39.6 654H46.6L39.6 670.8H32.4Z"/></g>
<defs><linearGradient id="lg" x1="0" y1="0" x2="1" y2="1"><stop offset="0" stop-color="#8f5be8"/><stop offset="1" stop-color="#e05aa8"/></linearGradient></defs>
<circle cx="1002.5" cy="672.2" r="9.8" fill="none" stroke="url(#lg)" stroke-width="1.7"/>
<path d="M1005 665.4L998.6 673.4H1002.4L1000.4 679.4L1007.2 671H1003.2Z" fill="url(#lg)"/>
<circle cx="990.4" cy="677" r="5.2" fill="#17172a"/>
<path d="M990.4 671.6Q991.2 676.2 995.6 677Q991.2 677.8 990.4 682.4Q989.6 677.8 985.2 677Q989.6 676.2 990.4 671.6Z" fill="#7d5cf0"/>
<g><circle cx="1078.6000000000001" cy="673.0999999999999" r="11.4" fill="#c9403c"/><circle cx="1077.4" cy="672.3" r="11.6" fill="#d9534f"/><circle cx="1077.4" cy="672.3" r="10" fill="#15152a"/><clipPath id="fc1077"><circle cx="1077.4" cy="672.3" r="8.8"/></clipPath><g clip-path="url(#fc1077)"><rect x="1068.4" y="663.3" width="18" height="18" fill="#f4f4f4"/><rect x="1068.4" y="663.7" width="18" height="1.9" fill="#e0524e"/><rect x="1068.4" y="667.3" width="18" height="1.9" fill="#e0524e"/><rect x="1068.4" y="670.9" width="18" height="1.9" fill="#e0524e"/><rect x="1068.4" y="674.5" width="18" height="1.9" fill="#e0524e"/><rect x="1068.4" y="678.1" width="18" height="1.9" fill="#e0524e"/><rect x="1068.4" y="681.7" width="18" height="1.9" fill="#e0524e"/><rect x="1068.4" y="663.3" width="10" height="9.6" fill="#3f5fb0"/><circle cx="1070.0" cy="665.7" r="0.5" fill="#fff"/><circle cx="1070.0" cy="668.1" r="0.5" fill="#fff"/><circle cx="1070.0" cy="670.5" r="0.5" fill="#fff"/><circle cx="1072.3" cy="665.7" r="0.5" fill="#fff"/><circle cx="1072.3" cy="668.1" r="0.5" fill="#fff"/><circle cx="1072.3" cy="670.5" r="0.5" fill="#fff"/><circle cx="1074.6" cy="665.7" r="0.5" fill="#fff"/><circle cx="1074.6" cy="668.1" r="0.5" fill="#fff"/><circle cx="1074.6" cy="670.5" r="0.5" fill="#fff"/><circle cx="1076.9" cy="665.7" r="0.5" fill="#fff"/><circle cx="1076.9" cy="668.1" r="0.5" fill="#fff"/><circle cx="1076.9" cy="670.5" r="0.5" fill="#fff"/></g></g>
<g><circle cx="1053.2" cy="673.0999999999999" r="11.4" fill="#c9403c"/><circle cx="1052" cy="672.3" r="11.6" fill="#d9534f"/><circle cx="1052" cy="672.3" r="10" fill="#15152a"/><clipPath id="fc1052"><circle cx="1052" cy="672.3" r="8.8"/></clipPath><g clip-path="url(#fc1052)"><rect x="1043" y="663.3" width="18" height="18" fill="#f4f4f4"/><rect x="1043" y="663.7" width="18" height="1.9" fill="#e0524e"/><rect x="1043" y="667.3" width="18" height="1.9" fill="#e0524e"/><rect x="1043" y="670.9" width="18" height="1.9" fill="#e0524e"/><rect x="1043" y="674.5" width="18" height="1.9" fill="#e0524e"/><rect x="1043" y="678.1" width="18" height="1.9" fill="#e0524e"/><rect x="1043" y="681.7" width="18" height="1.9" fill="#e0524e"/><rect x="1043" y="663.3" width="10" height="9.6" fill="#3f5fb0"/><circle cx="1044.6" cy="665.7" r="0.5" fill="#fff"/><circle cx="1044.6" cy="668.1" r="0.5" fill="#fff"/><circle cx="1044.6" cy="670.5" r="0.5" fill="#fff"/><circle cx="1046.9" cy="665.7" r="0.5" fill="#fff"/><circle cx="1046.9" cy="668.1" r="0.5" fill="#fff"/><circle cx="1046.9" cy="670.5" r="0.5" fill="#fff"/><circle cx="1049.2" cy="665.7" r="0.5" fill="#fff"/><circle cx="1049.2" cy="668.1" r="0.5" fill="#fff"/><circle cx="1049.2" cy="670.5" r="0.5" fill="#fff"/><circle cx="1051.5" cy="665.7" r="0.5" fill="#fff"/><circle cx="1051.5" cy="668.1" r="0.5" fill="#fff"/><circle cx="1051.5" cy="670.5" r="0.5" fill="#fff"/></g></g>
<g><circle cx="1033.0" cy="673.0999999999999" r="11.4" fill="#c9403c"/><circle cx="1031.8" cy="672.3" r="11.6" fill="#d9534f"/><circle cx="1031.8" cy="672.3" r="10" fill="#15152a"/><clipPath id="fc1031"><circle cx="1031.8" cy="672.3" r="8.8"/></clipPath><g clip-path="url(#fc1031)"><rect x="1022.8" y="663.3" width="18" height="18" fill="#f4f4f4"/><rect x="1022.8" y="663.7" width="18" height="1.9" fill="#e0524e"/><rect x="1022.8" y="667.3" width="18" height="1.9" fill="#e0524e"/><rect x="1022.8" y="670.9" width="18" height="1.9" fill="#e0524e"/><rect x="1022.8" y="674.5" width="18" height="1.9" fill="#e0524e"/><rect x="1022.8" y="678.1" width="18" height="1.9" fill="#e0524e"/><rect x="1022.8" y="681.7" width="18" height="1.9" fill="#e0524e"/><rect x="1022.8" y="663.3" width="10" height="9.6" fill="#3f5fb0"/><circle cx="1024.4" cy="665.7" r="0.5" fill="#fff"/><circle cx="1024.4" cy="668.1" r="0.5" fill="#fff"/><circle cx="1024.4" cy="670.5" r="0.5" fill="#fff"/><circle cx="1026.7" cy="665.7" r="0.5" fill="#fff"/><circle cx="1026.7" cy="668.1" r="0.5" fill="#fff"/><circle cx="1026.7" cy="670.5" r="0.5" fill="#fff"/><circle cx="1029.0" cy="665.7" r="0.5" fill="#fff"/><circle cx="1029.0" cy="668.1" r="0.5" fill="#fff"/><circle cx="1029.0" cy="670.5" r="0.5" fill="#fff"/><circle cx="1031.3" cy="665.7" r="0.5" fill="#fff"/><circle cx="1031.3" cy="668.1" r="0.5" fill="#fff"/><circle cx="1031.3" cy="670.5" r="0.5" fill="#fff"/></g></g>
<path d="M1150.9 695.4H1159.7L1164.1 702.8L1159.7 710.2H1150.9L1146.5 702.8Z" fill="none" stroke="#d0d2d8" stroke-width="1.4" stroke-linejoin="round"/><circle cx="1155.3" cy="702.8" r="2.6" fill="none" stroke="#d0d2d8" stroke-width="1.4"/>
</svg>
</div>
<div id="bar">
<div class="sym f" style="top:-6.7px">CRCL</div>
<div class="sym" style="top:18px">BTCUSD</div>
<div class="sym f" style="top:41.2px">MSTR</div>
<div class="tf f" style="top:-6.7px">1H</div>
<div class="tf" style="top:18px">2H</div>
<div class="tf f" style="top:41.2px">4H</div>
<svg width="1199" height="76" viewBox="0 717 1199 76" style="position:absolute;left:0;top:0" fill="none" stroke="#f2f2f2" stroke-width="1.65" stroke-linecap="round" stroke-linejoin="round">
<path d="M397.6 748.2 L408.8 735.8 a3.1 3.1 0 0 1 4.7 4.2 L402.2 752.2 L396.8 753 Z M399.4 747.2L403.4 750.8"/>
<path d="M396.8 753 C394.3 752.6 392.6 754 393.2 755.6 C394 757.6 397.5 756.4 400.5 754.8 C404.5 752.8 410.5 752.4 413.8 757.2"/>
<path d="M446.8 755.6V751.4H452.6V747.9H459V744.7H465.6V755.6Z M452.6 751.4V755.6 M459 747.9V755.6"/>
<path d="M446.8 743.4L451.6 739.4L456.8 743.4L465.2 736"/>
<rect x="500.6" y="738.2" width="7.2" height="6.8" rx="1.6"/>
<rect x="500.6" y="748.3" width="7.2" height="6.8" rx="1.6"/>
<rect x="511.2" y="738.2" width="7.2" height="6.8" rx="1.6"/>
<rect x="511.2" y="748.3" width="7.2" height="6.8" rx="1.6"/>
<path d="M551.6 751.4L560.2 744.4L564.2 748.2L573.6 740.8" stroke-width="5"/>
<path d="M551.6 751.4L560.2 744.4L564.2 748.2L573.6 740.8" stroke="#000" stroke-width="1.9"/>
<circle cx="616" cy="746.4" r="11.3"/><path d="M610.4 746.4H621.6M616 740.8V752"/>
<circle cx="669.4" cy="746.9" r="9.4"/><path d="M658.2 740.2L662.2 736.6M669.6 742.2V747.8H665.2"/>
<circle cx="678.6" cy="737.6" r="4.6" fill="#000" stroke="none"/><circle cx="678.6" cy="737.6" r="3.2" fill="#f0434e" stroke="none"/>
<rect x="716.4" y="740" width="4.8" height="13" rx="0.8"/><path d="M718.8 735.6V740M718.8 753V757.2"/>
<rect x="726" y="742.3" width="4" height="8" rx="0.8"/><path d="M728 739.2V742.3M728 750.3V753.8"/>
<path d="M767.8 746.9L775.2 741.4V752.4Z M776.6 746.9L783.8 740.8V753.4Z"/>
<path d="M829.2 736.9L840.4 743.4L829.2 749.8L818 743.4Z M817.8 750.6L829.2 756.8L840.8 750.6"/>
<circle cx="873.7" cy="746.4" r="2.5"/>
<circle cx="882.6" cy="746.4" r="2.5"/>
<circle cx="891.4" cy="746.4" r="2.5"/>
<path d="M913.9 736.6V756" stroke="#3a3a3a" stroke-width="1.2"/>
<path d="M1083.2 736.6V756" stroke="#3a3a3a" stroke-width="1.2"/>
<path d="M943.4 741.2L938.4 745.7L943.4 750M938.6 745.7H946 Q951 746 951.3 751.4"/>
<path d="M988.2 742.4V739.6Q988.2 736 991.8 736H994.6 M1002.2 736H1005Q1008.8 736 1008.8 739.6V742.4 M1008.8 750.4V753.2Q1008.8 756.8 1005 756.8H1002.2 M994.6 756.8H991.8Q988.2 756.8 988.2 753.2V750.4"/>
<path d="M1053.4 741.2L1058.4 745.7L1053.4 750M1058.2 745.7H1050.8 Q1045.8 746 1045.5 751.4" stroke="#6a6a6a"/>
<circle cx="1115" cy="744.2" r="9.6"/><path d="M1110.4 744.2H1119.6M1115 739.6V748.8 M1110.6 752.9V755.4H1119.4V752.9 M1112 755.4V757.8H1118V755.4"/>
<path d="M1163.6 742.8H1160.2Q1157.6 742.8 1157.6 745.4V755Q1157.6 757.6 1160.2 757.6H1176Q1178.6 757.6 1178.6 755V745.4Q1178.6 742.8 1176 742.8H1172.6 M1168.1 751.4V735.8 M1163.6 740L1168.1 735.6L1172.6 740"/>
<path d="M1179 786.4Q1190.5 783 1193.4 772.6" stroke="#fff" stroke-width="4"/>
</svg>
<div style="position:absolute;left:0;bottom:0;width:5px;height:5px;background:radial-gradient(circle at 100% 0,transparent 4.3px,#fff 5px)"></div>
</div>
</body></html>
